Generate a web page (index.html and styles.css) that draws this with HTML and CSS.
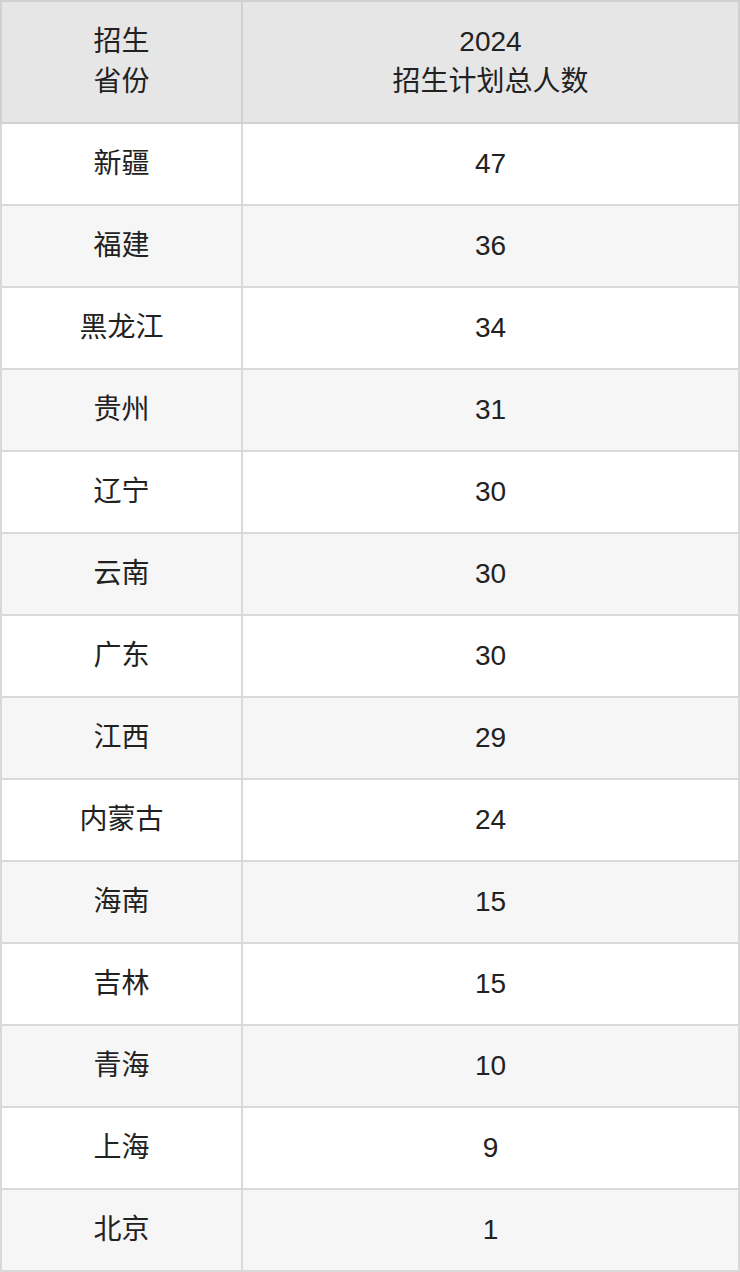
FILE: index.html
```html
<!DOCTYPE html>
<html lang="zh-CN">
<head>
<meta charset="utf-8">
<link rel="stylesheet" href="styles.css">
</head>
<body>
<table class="plan">
  <thead>
    <tr>
      <th class="col-prov">招生<br>省份</th>
      <th class="col-num">2024<br>招生计划总人数</th>
    </tr>
  </thead>
  <tbody>
    <tr><td>新疆</td><td>47</td></tr>
    <tr><td>福建</td><td>36</td></tr>
    <tr><td>黑龙江</td><td>34</td></tr>
    <tr><td>贵州</td><td>31</td></tr>
    <tr><td>辽宁</td><td>30</td></tr>
    <tr><td>云南</td><td>30</td></tr>
    <tr><td>广东</td><td>30</td></tr>
    <tr><td>江西</td><td>29</td></tr>
    <tr><td>内蒙古</td><td>24</td></tr>
    <tr><td>海南</td><td>15</td></tr>
    <tr><td>吉林</td><td>15</td></tr>
    <tr><td>青海</td><td>10</td></tr>
    <tr><td>上海</td><td>9</td></tr>
    <tr><td>北京</td><td>1</td></tr>
  </tbody>
</table>
</body>
</html>
```
FILE: styles.css
```css
html, body {
  margin: 0;
  padding: 0;
  background: #ffffff;
}
.plan {
  width: 740px;
  border-collapse: collapse;
  table-layout: fixed;
  font-family: "Liberation Sans", Arial, "Noto Sans CJK SC", sans-serif;
  font-size: 28px;
  color: #222222;
}
.plan th,
.plan td {
  border: 2px solid #d9d9d9;
  text-align: center;
  vertical-align: middle;
  padding: 0;
  box-sizing: border-box;
}
.plan th {
  height: 122px;
  background: #e6e6e6;
  font-weight: normal;
  line-height: 40px;
  border-color: #d0d0d0;
}
.plan td {
  height: 82px;
  line-height: 40px;
}
.col-prov {
  width: 241px;
}
.plan tbody tr:nth-child(even) td {
  background: #f6f6f6;
}
```
